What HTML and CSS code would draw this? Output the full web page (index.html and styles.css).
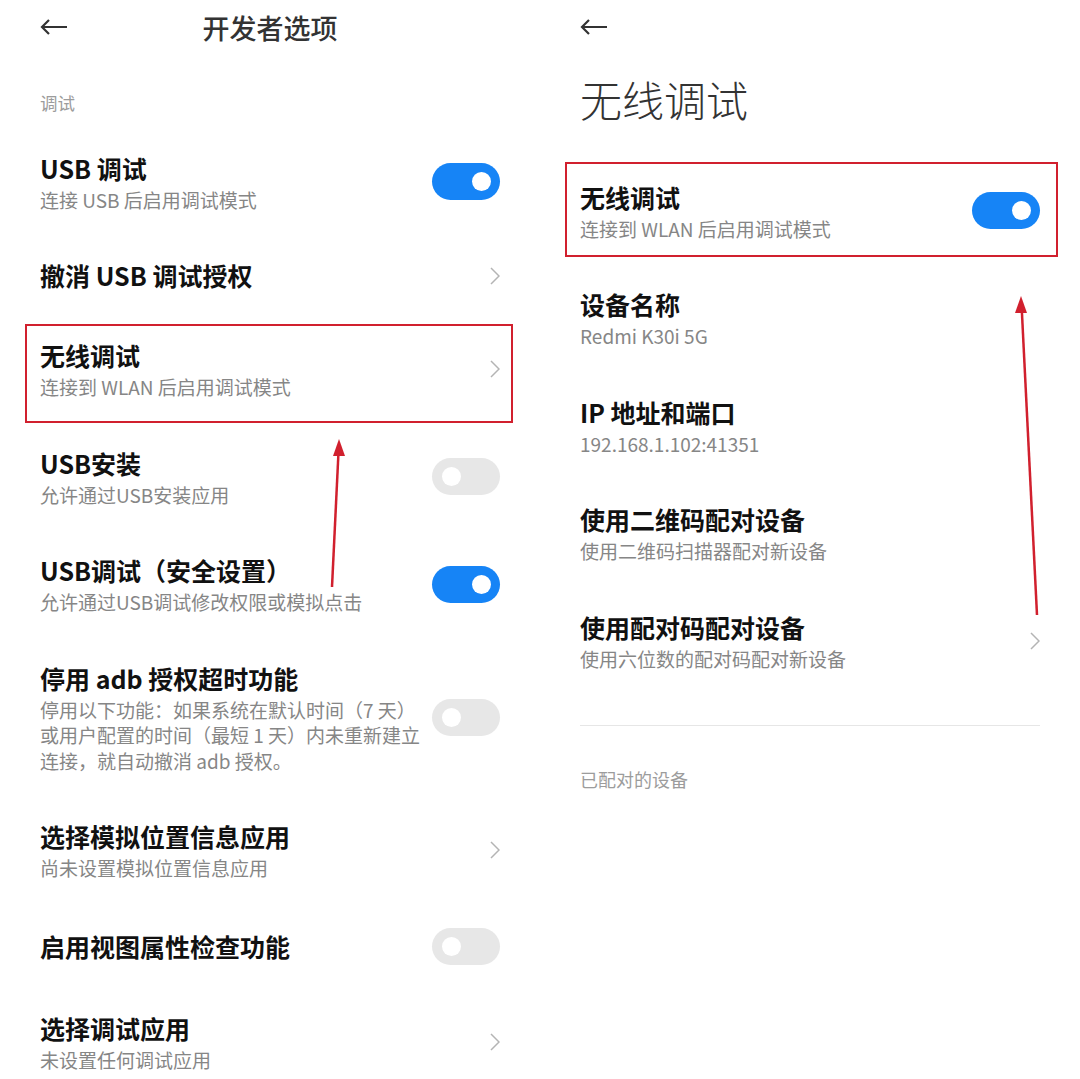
FILE: index.html
```html
<!DOCTYPE html>
<html lang="zh-CN">
<head>
   <meta charset="UTF-8">
   <meta name="viewport" content="width=device-width, initial-scale=1.0">
   <title>开发者选项 / 无线调试</title>
   <link rel="stylesheet" href="styles.css">
</head>
<body>
   <div class="page">
      <!-- left screen: developer options -->
      <div class="panel">
         <div class="top-bar">
            <svg class="back" width="28" height="16" viewBox="0 0 28 16"><path d="M27 8H2M9 1L2 8l7 7" fill="none" stroke="#333" stroke-width="2.2"/></svg>
            <div class="top-title">开发者选项</div>
            <span></span>
         </div>
         <div class="section-label">调试</div>

         <div class="row">
            <div class="row-text">
               <div class="row-title">USB 调试</div>
               <div class="row-sub">连接 USB 后启用调试模式</div>
            </div>
            <span class="switch on"></span>
         </div>
         <div class="row">
            <div class="row-text">
               <div class="row-title">撤消 USB 调试授权</div>
            </div>
            <svg class="chevron" width="10" height="18" viewBox="0 0 10 18"><path d="M1 1l8 8-8 8" fill="none" stroke="#b4b4b4" stroke-width="1.5"/></svg>
         </div>
         <div class="row marked marked-left">
            <div class="row-text">
               <div class="row-title">无线调试</div>
               <div class="row-sub">连接到 WLAN 后启用调试模式</div>
            </div>
            <svg class="chevron" width="10" height="18" viewBox="0 0 10 18"><path d="M1 1l8 8-8 8" fill="none" stroke="#b4b4b4" stroke-width="1.5"/></svg>
         </div>
         <div class="row">
            <div class="row-text">
               <div class="row-title">USB安装</div>
               <div class="row-sub">允许通过USB安装应用</div>
            </div>
            <span class="switch"></span>
         </div>
         <div class="row">
            <div class="row-text">
               <div class="row-title">USB调试（安全设置）</div>
               <div class="row-sub">允许通过USB调试修改权限或模拟点击</div>
            </div>
            <span class="switch on"></span>
         </div>
         <div class="row">
            <div class="row-text">
               <div class="row-title">停用 adb 授权超时功能</div>
               <div class="row-sub nowrap">停用以下功能：如果系统在默认时间（7 天）<br>或用户配置的时间（最短 1 天）内未重新建立<br>连接，就自动撤消 adb 授权。</div>
            </div>
            <span class="switch"></span>
         </div>
         <div class="row">
            <div class="row-text">
               <div class="row-title">选择模拟位置信息应用</div>
               <div class="row-sub">尚未设置模拟位置信息应用</div>
            </div>
            <svg class="chevron" width="10" height="18" viewBox="0 0 10 18"><path d="M1 1l8 8-8 8" fill="none" stroke="#b4b4b4" stroke-width="1.5"/></svg>
         </div>
         <div class="row">
            <div class="row-text">
               <div class="row-title">启用视图属性检查功能</div>
            </div>
            <span class="switch"></span>
         </div>
         <div class="row">
            <div class="row-text">
               <div class="row-title">选择调试应用</div>
               <div class="row-sub">未设置任何调试应用</div>
            </div>
            <svg class="chevron" width="10" height="18" viewBox="0 0 10 18"><path d="M1 1l8 8-8 8" fill="none" stroke="#b4b4b4" stroke-width="1.5"/></svg>
         </div>
      </div>

      <!-- right screen: wireless debugging -->
      <div class="panel">
         <div class="top-bar">
            <svg class="back" width="28" height="16" viewBox="0 0 28 16"><path d="M27 8H2M9 1L2 8l7 7" fill="none" stroke="#333" stroke-width="2.2"/></svg>
         </div>
         <h1 class="big-title">无线调试</h1>

         <div class="row marked marked-right">
            <div class="row-text">
               <div class="row-title">无线调试</div>
               <div class="row-sub">连接到 WLAN 后启用调试模式</div>
            </div>
            <span class="switch on"></span>
         </div>
         <div class="row">
            <div class="row-text">
               <div class="row-title">设备名称</div>
               <div class="row-sub">Redmi K30i 5G</div>
            </div>
         </div>
         <div class="row">
            <div class="row-text">
               <div class="row-title">IP 地址和端口</div>
               <div class="row-sub">192.168.1.102:41351</div>
            </div>
         </div>
         <div class="row">
            <div class="row-text">
               <div class="row-title">使用二维码配对设备</div>
               <div class="row-sub">使用二维码扫描器配对新设备</div>
            </div>
         </div>
         <div class="row">
            <div class="row-text">
               <div class="row-title">使用配对码配对设备</div>
               <div class="row-sub">使用六位数的配对码配对新设备</div>
            </div>
            <svg class="chevron" width="10" height="18" viewBox="0 0 10 18"><path d="M1 1l8 8-8 8" fill="none" stroke="#b4b4b4" stroke-width="1.5"/></svg>
         </div>
         <div class="divider"></div>
         <div class="section-label paired">已配对的设备</div>
      </div>

      <!-- red annotation arrows drawn over both screens -->
      <svg class="marks" width="1080" height="1079" viewBox="0 0 1080 1079">
         <line x1="332" y1="587" x2="338.5" y2="452" stroke="#d1202e" stroke-width="2.5"/>
         <polygon points="339,439 333,456 345,456" fill="#d1202e"/>
         <line x1="1037" y1="615" x2="1021.8" y2="310" stroke="#d1202e" stroke-width="2.5"/>
         <polygon points="1021,296 1015,313 1027,313" fill="#d1202e"/>
      </svg>
   </div>
</body>
</html>
```

FILE: styles.css
```css
body {
   margin: 0;
   padding: 0;
   background-color: #fff;
   font-family: "Noto Sans CJK SC", "Noto Sans", sans-serif;
   color: #111;
}

.page {
   position: relative;
   width: 1080px;
   height: 1079px;
   overflow: hidden;
   display: grid;
   grid-template-columns: 540px 540px;
}

.panel {
   display: flex;
   flex-direction: column;
}

.top-bar {
   height: 54px;
   padding: 0 40px;
   display: grid;
   grid-template-columns: 1fr auto 1fr;
   align-items: center;
}

.back {
   display: block;
}

.top-title {
   font-size: 27px;
   font-weight: 500;
   color: #333;
}

.section-label {
   margin: 37px 0 13px;
   padding: 0 40px;
   font-size: 17.5px;
   line-height: 24px;
   color: #9c9c9c;
}

.big-title {
   margin: 17px 0 30px;
   padding: 0 40px;
   font-size: 42px;
   line-height: 56px;
   font-weight: 300;
   color: #333;
}

.row {
   position: relative;
   display: flex;
   align-items: center;
   gap: 12px;
   padding: 23.5px 40px;
}

.row-text {
   flex: 1;
   min-width: 0;
}

.row-title {
   font-size: 25px;
   line-height: 33px;
   font-weight: 600;
   color: #111;
}

.row-sub {
   margin-top: 2px;
   font-size: 19px;
   line-height: 25.5px;
   color: #868686;
}

.nowrap {
   white-space: nowrap;
}

.chevron {
   flex: none;
   display: block;
}

.switch {
   flex: none;
   position: relative;
   width: 68px;
   height: 37px;
   border-radius: 19px;
   background-color: #e7e7e7;
}

.switch::after {
   content: "";
   position: absolute;
   top: 9px;
   left: 9.5px;
   width: 19px;
   height: 19px;
   border-radius: 50%;
   background-color: #fff;
}

.switch.on {
   background-color: #1684f6;
}

.switch.on::after {
   left: auto;
   right: 9.5px;
}

/* red highlight boxes from the screenshot annotation */
.marked::after {
   content: "";
   position: absolute;
   border: 2.5px solid #d1202e;
   pointer-events: none;
}

.marked-left::after {
   top: 8px;
   bottom: 0;
   left: 25px;
   right: 27px;
}

.marked-right::after {
   top: 5px;
   bottom: 8px;
   left: 25px;
   right: 22px;
}

.divider {
   height: 1px;
   margin: 30px 40px 0;
   background-color: #e6e6e6;
}

.section-label.paired {
   margin: 41px 0 0;
   font-size: 18px;
}

.marks {
   position: absolute;
   top: 0;
   left: 0;
   pointer-events: none;
}
```
